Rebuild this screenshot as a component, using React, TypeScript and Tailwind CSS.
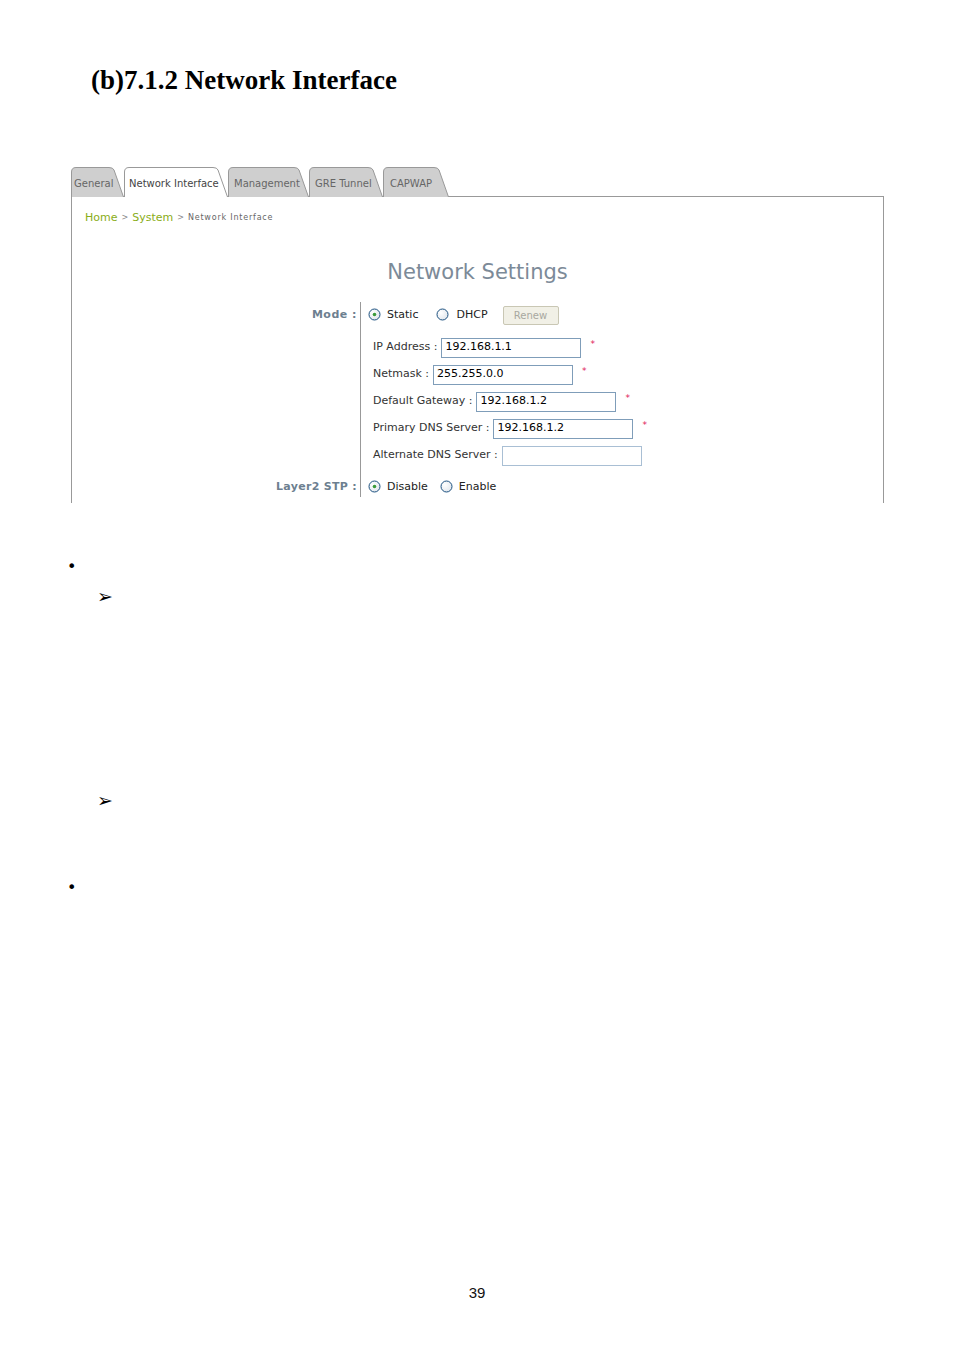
import React from "react";

const tabs = [
  { label: "General", width: 53, pad: 3, active: false },
  { label: "Network Interface", width: 104, pad: 5, active: true },
  { label: "Management", width: 81, pad: 6, active: false },
  { label: "GRE Tunnel", width: 74, pad: 6, active: false },
  { label: "CAPWAP", width: 66, pad: 7, active: false },
];

const fields = [
  { label: "IP Address :", value: "192.168.1.1", required: true },
  { label: "Netmask :", value: "255.255.0.0", required: true },
  { label: "Default Gateway :", value: "192.168.1.2", required: true },
  { label: "Primary DNS Server :", value: "192.168.1.2", required: true },
  { label: "Alternate DNS Server :", value: "", required: false },
];

function Tab({ label, width, pad, active }: { label: string; width: number; pad: number; active: boolean }) {
  const h = 30;
  const d = `M0.5,${h} L0.5,5 Q0.5,0.5 5,0.5 L${width - 15},0.5 Q${width - 11},0.5 ${width - 10},3 L${width - 0.5},${h}`;
  return (
    <div className={"relative h-[30px] flex items-center shrink-0 " + (active ? "z-10" : "")} style={{ width }}>
      <svg className="absolute inset-0" width={width} height={h} viewBox={`0 0 ${width} ${h}`}>
        <path d={d} fill={active ? "#ffffff" : "#cfcfcf"} stroke="#999999" strokeWidth="1" />
      </svg>
      <span
        className={"relative pt-[3px] text-[10px] whitespace-nowrap " + (active ? "text-[#444]" : "text-[#666]")}
        style={{ paddingLeft: pad }}
      >
        {label}
      </span>
    </div>
  );
}

function Radio({ checked }: { checked: boolean }) {
  return (
    <svg width="13" height="13" viewBox="0 0 13 13" className="shrink-0 -mt-[2px]">
      <defs>
        <radialGradient id={checked ? "rg1" : "rg0"} cx="0.35" cy="0.35" r="0.8">
          <stop offset="0" stopColor="#ffffff" />
          <stop offset="1" stopColor="#dde3ea" />
        </radialGradient>
      </defs>
      <circle cx="6.5" cy="6.5" r="5.5" fill={`url(#${checked ? "rg1" : "rg0"})`} stroke="#1c5180" strokeWidth="1" />
      {checked && <circle cx="6.5" cy="6.5" r="1.8" fill="#3a9a3a" />}
    </svg>
  );
}

export default function App() {
  return (
    <div className="w-[954px] h-[1351px] bg-white text-black" style={{ fontFamily: "'DejaVu Sans', Verdana, sans-serif" }}>
      <h1
        className="pl-[91px] pt-[64px] text-[27px] leading-[32px] font-bold"
        style={{ fontFamily: "'Liberation Serif', 'DejaVu Serif', serif" }}
      >
        (b)7.1.2 Network Interface
      </h1>

      {/* tabs */}
      <div className="mt-[71px] ml-[71px] flex items-end -mb-px relative">
        {tabs.map((t) => (
          <Tab key={t.label} {...t} />
        ))}
      </div>

      {/* panel */}
      <div className="ml-[71px] w-[813px] h-[307px] border-l border-r border-t border-[#999]">
        <div className="pl-[13px] pt-[14px] h-[28px] flex items-center gap-[4px] leading-[14px]">
          <span className="text-[11px] text-[#8aad17]">Home</span>
          <span className="text-[8px] text-[#888]">&gt;</span>
          <span className="text-[11px] text-[#8aad17]">System</span>
          <span className="text-[8px] text-[#888]">&gt;</span>
          <span className="text-[8px] text-[#666] tracking-[0.8px]">Network Interface</span>
        </div>

        <div className="mt-[33px] h-[28px] leading-[28px] text-center text-[21px] text-[#7c8a98]">
          Network Settings
        </div>

        <div className="mt-[16px] grid grid-cols-[288px_1fr]">
          {/* mode row */}
          <div className="h-[26px] flex items-center justify-end pr-[3px] text-[11px] font-bold text-[#6d7f90] tracking-[0.5px]">
            Mode :
          </div>
          <div className="h-[26px] flex items-center border-l border-[#999] pl-[7px] text-[11px] text-[#222]">
            <Radio checked />
            <span className="ml-[6px]">Static</span>
            <span className="ml-[18px]"><Radio checked={false} /></span>
            <span className="ml-[7px]">DHCP</span>
            <button className="ml-[15px] h-[19px] w-[56px] border border-[#c9c7b4] bg-[#f1f0e6] rounded-[2px] text-[10px] text-[#a8a8a0]">
              Renew
            </button>
          </div>

          {/* fields */}
          <div />
          <div className="border-l border-[#999] pl-[12px] pt-[6px] pb-[8px]">
            {fields.map((f) => (
              <div key={f.label} className="h-[27px] flex items-center text-[11px]">
                <span className="text-[#333] whitespace-nowrap">{f.label}</span>
                <div
                  className={
                    "ml-[4px] w-[140px] h-[20px] border bg-white px-[3px] flex items-center text-[11px] text-black " +
                    (f.value ? "border-[#7f9db9]" : "border-[#a9bfd4]")
                  }
                >
                  {f.value}
                </div>
                {f.required && <span className="ml-[9px] -mt-[6px] text-[9px] text-[#e0205a]">*</span>}
              </div>
            ))}
          </div>

          {/* layer2 row */}
          <div className="h-[20px] flex items-center justify-end pr-[3px] text-[11px] font-bold text-[#6d7f90] tracking-[0.3px]">
            Layer2 STP :
          </div>
          <div className="h-[20px] flex items-center border-l border-[#999] pl-[7px] text-[11px] text-[#222]">
            <Radio checked />
            <span className="ml-[6px]">Disable</span>
            <span className="ml-[12px]"><Radio checked={false} /></span>
            <span className="ml-[6px]">Enable</span>
          </div>
        </div>
      </div>

      {/* bullets */}
      <div className="mt-[54px] h-[20px] leading-[20px] pl-[67px] text-[16px]">•</div>
      <div className="mt-[9px] h-[20px] leading-[20px] pl-[97px] text-[19px]">➢</div>
      <div className="mt-[184px] h-[20px] leading-[20px] pl-[97px] text-[19px]">➢</div>
      <div className="mt-[68px] h-[20px] leading-[20px] pl-[67px] text-[16px]">•</div>

      <div
        className="mt-[385px] h-[20px] leading-[20px] text-center text-[15px] text-[#111]"
        style={{ fontFamily: "'Liberation Sans', Arial, sans-serif" }}
      >
        39
      </div>
    </div>
  );
}
